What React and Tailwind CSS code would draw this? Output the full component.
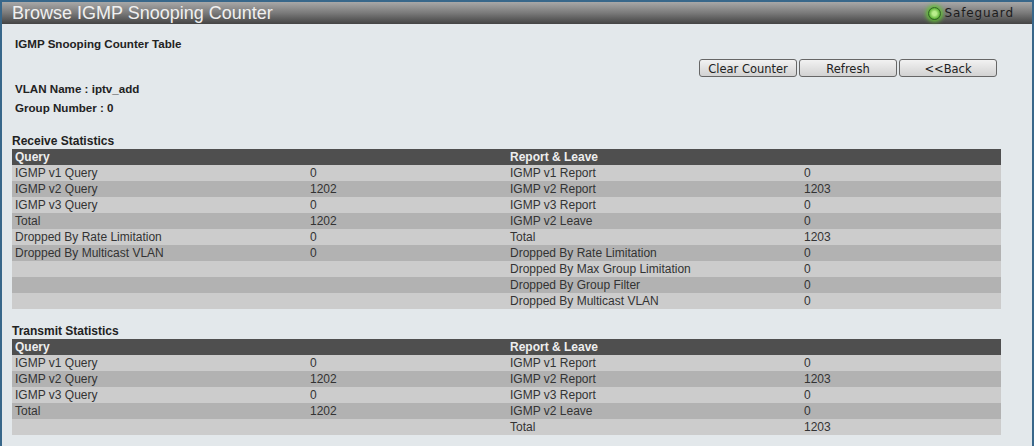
import React from 'react';

const receiveRows = [
    ['IGMP v1 Query', '0', 'IGMP v1 Report', '0'],
    ['IGMP v2 Query', '1202', 'IGMP v2 Report', '1203'],
    ['IGMP v3 Query', '0', 'IGMP v3 Report', '0'],
    ['Total', '1202', 'IGMP v2 Leave', '0'],
    ['Dropped By Rate Limitation', '0', 'Total', '1203'],
    ['Dropped By Multicast VLAN', '0', 'Dropped By Rate Limitation', '0'],
    ['', '', 'Dropped By Max Group Limitation', '0'],
    ['', '', 'Dropped By Group Filter', '0'],
    ['', '', 'Dropped By Multicast VLAN', '0'],
];

const transmitRows = [
    ['IGMP v1 Query', '0', 'IGMP v1 Report', '0'],
    ['IGMP v2 Query', '1202', 'IGMP v2 Report', '1203'],
    ['IGMP v3 Query', '0', 'IGMP v3 Report', '0'],
    ['Total', '1202', 'IGMP v2 Leave', '0'],
    ['', '', 'Total', '1203'],
];

function StatsTable({ title, rows }) {
    return (
        <div>
            <div className="h-[15px] text-[12px] leading-[15px] font-bold text-[#222]">{title}</div>
            <div className="w-[989px] text-[12px] leading-[16px]">
                <div className="grid h-4 grid-cols-[498px_491px] bg-[#4f4f4f] font-bold text-[#eeeeee]">
                    <div className="pl-[3px]">Query</div>
                    <div>Report &amp; Leave</div>
                </div>
                {rows.map((row, i) => (
                    <div key={i} className={`grid h-4 grid-cols-[295px_203px_294px_197px] text-[#333] ${i % 2 === 0 ? 'bg-[#cccccc]' : 'bg-[#b2b2b2]'}`}>
                        <div className="pl-[3px]">{row[0]}</div>
                        <div className="pl-[3px]">{row[1]}</div>
                        <div>{row[2]}</div>
                        <div>{row[3]}</div>
                    </div>
                ))}
            </div>
        </div>
    );
}

function Btn({ children }) {
    return (
        <button className="h-[18px] w-[98px] rounded-[3px] border border-[#666] bg-gradient-to-b from-[#f2f2f2] to-[#d2d2d2] pt-px text-center text-[11.5px] font-normal leading-[17px] text-[#222] font-['DejaVu_Sans',sans-serif]">
            {children}
        </button>
    );
}

export default function App() {
    return (
        <div className="h-[446px] w-[1035px] overflow-hidden bg-white font-['Liberation_Sans',Arial,sans-serif]">
            <div className="h-full w-[1034px] border-x-2 border-t-2 border-[#38678a] bg-[#e3e8eb]">
                {/* Title bar */}
                <div className="flex h-[22px] items-center justify-between bg-gradient-to-b from-[#a8a8a8] via-[#7a7a7a] to-[#444444] pl-[10px] pr-[18px]">
                    <span className="text-[18px] leading-[22px] text-[#f0f0f0]">Browse IGMP Snooping Counter</span>
                    <div className="flex items-center gap-[3px]">
                        <span className="h-[13px] w-[13px] rounded-full border border-[#2f6d1c] bg-[radial-gradient(circle,#b9ee8c_25%,#4fa82a_75%)] shadow-[0_0_4px_2px_#62c234]"></span>
                        <span className="text-[12px] leading-[14px] tracking-[0.9px] text-[#1c1c1c] font-['DejaVu_Sans',sans-serif] [text-shadow:0_0_1px_#777]">Safeguard</span>
                    </div>
                </div>

                <div className="pl-[10px]">
                    {/* Info block */}
                    <div className="h-[110px] pl-[3px] text-[11.6px] font-bold leading-[15px] text-[#222]">
                        <div className="pt-[12px]">IGMP Snooping Counter Table</div>
                        <div className="flex justify-end gap-[2px] pr-[35px] pt-[8px]">
                            <Btn>Clear Counter</Btn>
                            <Btn>Refresh</Btn>
                            <Btn>&lt;&lt;Back</Btn>
                        </div>
                        <div className="pt-[4px]">VLAN Name : iptv_add</div>
                        <div className="pt-[4px]">Group Number : 0</div>
                    </div>

                    <div className="flex flex-col gap-[15px]">
                        <StatsTable title="Receive Statistics" rows={receiveRows} />
                        <StatsTable title="Transmit Statistics" rows={transmitRows} />
                    </div>
                </div>
            </div>
        </div>
    );
}
